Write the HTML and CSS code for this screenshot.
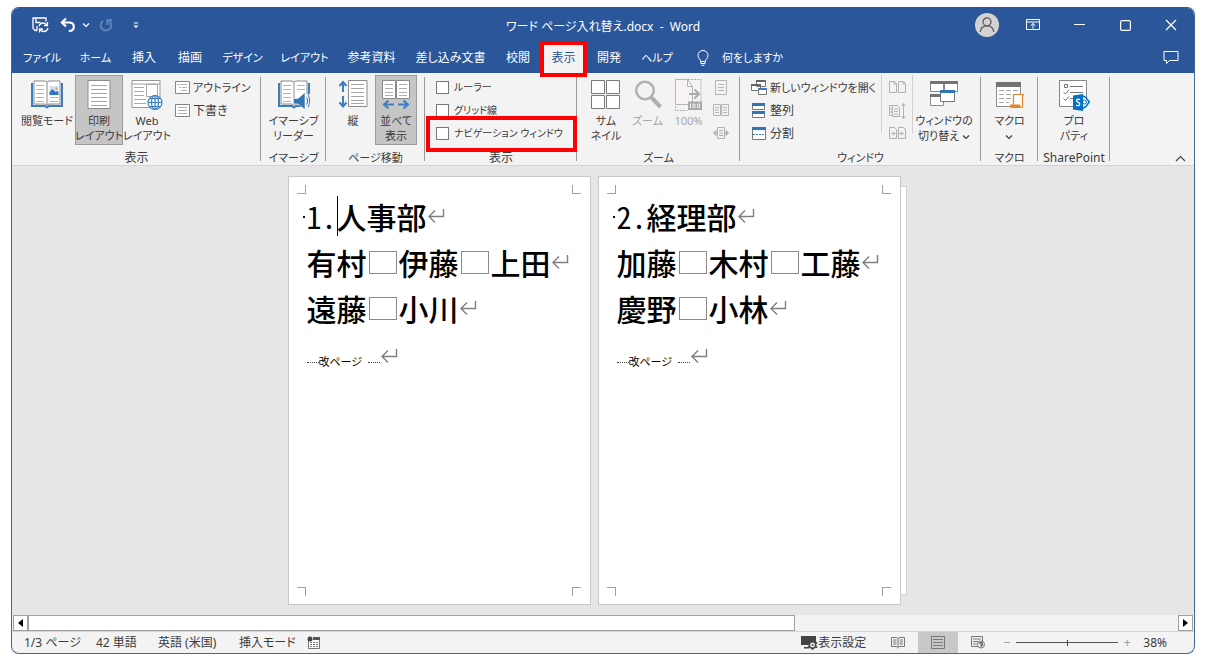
FILE: index.html
```html
<!DOCTYPE html>
<html lang="ja">
<head>
<meta charset="utf-8">
<title>ワード ページ入れ替え.docx - Word</title>
<link rel="stylesheet" href="styles.css">
</head>
<body>
<svg class="defs" width="0" height="0" aria-hidden="true">
  <symbol id="ret" viewBox="0 0 18 16"><path d="M16.500 1v7.500H2M8 2.500l-6 6 6 6" fill="none" stroke="#7f7f7f" stroke-width="1.400"/></symbol>
  <symbol id="chev" viewBox="0 0 8 6"><path d="M1 1.500l3 3 3-3" fill="none" stroke="currentColor" stroke-width="1.200"/></symbol>
</svg>
<div class="window">
  <header class="titlebar">
    <div class="qat">
      <button class="q" aria-label="上書き保存"><svg width="17" height="16" viewBox="0 0 17 16" fill="none" stroke="#fff" stroke-width="1.300"><path d="M5 13.500H3.200L1 11.300V1h13v3.500M4 1v4.500h4.500M5 13.500V9"/><path d="M7 9.300c.6-2.200 2.200-3.300 4.200-3.300 1.600 0 2.900.8 3.700 2.300M15.500 5v3.500H12M16 11c-.6 2.200-2.200 3.500-4.300 3.500-1.700 0-3-.9-3.700-2.500M7.500 15.500V12H11"/></svg></button>
      <button class="q undo" aria-label="元に戻す"><svg width="16" height="16" viewBox="0 0 16 16" fill="none" stroke="#fff" stroke-width="2.200"><path d="M6 1.500L1.900 5.500 6 9.500M2 5.500h7c3.500 0 4.800 2 4.800 4.200 0 2.800-2.200 4.300-5 4.300"/></svg></button>
      <button class="q-more" aria-label="元に戻すの履歴"><svg width="8" height="6"><use href="#chev"/></svg></button>
      <button class="q" aria-label="やり直し"><svg width="14" height="15" viewBox="0 0 14 15" fill="none" stroke="#5b80b8" stroke-width="2.200"><path d="M4 2.800A5.300 5.300 0 1 0 10 2.800M8.500 7V2h4.500"/></svg></button>
      <button class="q" aria-label="カスタマイズ"><svg width="6" height="7" viewBox="0 0 6 7"><path d="M1 .500h4v1H1zM.500 3.500h5L3 6z" fill="#fff"/></svg></button>
    </div>
    <h1 class="title">ワード ページ入れ替え.docx&nbsp; -&nbsp; Word</h1>
    <div class="sys">
      <button aria-label="アカウント"><svg width="24" height="24" viewBox="0 0 24 24"><circle cx="12" cy="12" r="12" fill="#d2d2d2"/><g fill="none" stroke="#555" stroke-width="1.200"><circle cx="12" cy="8.800" r="4"/><path d="M5.300 19c.3-4 3-6.200 6.700-6.200s6.400 2.200 6.700 6.200"/></g></svg></button>
      <button aria-label="リボンの表示オプション"><svg width="14" height="12" viewBox="0 0 14 12" fill="none" stroke="#fff"><path d="M.500.500h13v10H.500zM.500 3h13M7 9.500v-5M4.500 6.800L7 4.500l2.500 2.300"/></svg></button>
      <button aria-label="最小化"><svg width="11" height="11" viewBox="0 0 11 11"><path d="M0 4.500h11" stroke="#fff"/></svg></button>
      <button aria-label="最大化"><svg width="11" height="11" viewBox="0 0 11 11"><rect x=".6" y=".6" width="9.800" height="9.800" rx="1.500" fill="none" stroke="#fff" stroke-width="1.200"/></svg></button>
      <button aria-label="閉じる"><svg width="12" height="12" viewBox="0 0 12 12"><path d="M1 1l10 10M11 1L1 11" stroke="#fff" stroke-width="1.300"/></svg></button>
    </div>
  </header>

  <nav class="tabs">
    <div class="tablist">
      <button class="kana">ファイル</button><button class="kana">ホーム</button><button>挿入</button><button>描画</button><button class="kana">デザイン</button><button class="kana">レイアウト</button><button>参考資料</button><button>差し込み文書</button><button>校閲</button><button class="active callout">表示</button><button>開発</button><button class="kana">ヘルプ</button>
    </div>
    <button class="tell kana"><svg width="12" height="16" viewBox="0 0 12 16" fill="none" stroke="#fff"><path d="M3.800 11.500c0-2-2.800-3-2.800-6a5 5 0 0 1 10 0c0 3-2.800 4-2.800 6zM4 13.500h4M4.500 15.300h3M3.800 11.500v2M8.200 11.500v2"/></svg>何をしますか</button>
    <button class="comment" aria-label="コメント"><svg width="16" height="15" viewBox="0 0 16 15" fill="none" stroke="#fff"><path d="M1 1.500h14v9H6.500L3.500 13.500v-3H1z"/></svg></button>
  </nav>

  <section class="ribbon">
    <div class="group g-views">
      <div class="tools">
        <button class="big wide"><svg width="32" height="30" viewBox="0 0 32 30"><path d="M1 3v23h13l2 1.500 2-1.500h13V3" fill="none" stroke="#3e7ebf" stroke-width="2"/><path d="M3 1h11l2 1.200L18 1h11v23H18l-2 1.200L14 24H3z" fill="#fff" stroke="#8a8a8a"/><path d="M16 2.500v23" stroke="#8a8a8a"/><path d="M5 5.500h8M5 9.500h8M5 13.500h8M5 17.500h8M5 21.500h8M19 17.500h8M19 21.500h8" stroke="#b5b5b5"/><path d="M18.500 6h9v9h-9z" fill="#cfe2f3"/><path d="M18.500 15v-3l3-3 3 3 1.500-1 1.500 1v3z" fill="#2f76b8"/><circle cx="25.500" cy="8.500" r="1" fill="#e88b2e"/></svg><span>閲覧モード</span></button>
        <button class="big on print"><svg width="24" height="30" viewBox="0 0 24 30"><path d="M1 .500h22v28H1z" fill="#fff" stroke="#8a8a8a"/><path d="M4 5.500h16M4 9.500h16M4 13.500h16M4 17.500h16M4 21.500h16M4 25.500h16" stroke="#a5a5a5"/></svg><span>印刷<br>レイアウト</span></button>
        <button class="big web"><svg width="32" height="30" viewBox="0 0 32 30"><path d="M1 .500h28v27H1zM1 4h28" fill="#fff" stroke="#999"/><path d="M3 7.500h10M3 11.500h10M3 15.500h10M3 19.500h12M3 23.500h12" stroke="#a8a8a8"/><path d="M15.500 4.500h11v12h-11z" fill="#fff" stroke="#a8a8a8"/><g fill="#fff" stroke="#3e7ebf" stroke-width="1.200"><circle cx="24" cy="22.500" r="7"/><path fill="none" d="M17 22.500h14M18.500 18.500h11M18.500 26.500h11M24 15.500v14"/><ellipse fill="none" cx="24" cy="22.500" rx="3.500" ry="7"/></g></svg><span>Web<br>レイアウト</span></button>
        <div class="stack">
          <button class="row kana"><svg width="15" height="13" viewBox="0 0 15 13"><path d="M.500.500h14v12H.500z" fill="#fff" stroke="#858585"/><path d="M2 3.500h2M5 3.500h7M4 6.500h2M7 6.500h5M6 9.500h6" stroke="#b5b5b5"/></svg>アウトライン</button>
          <button class="row"><svg width="15" height="13" viewBox="0 0 15 13"><path d="M.500.500h14v12H.500z" fill="#fff" stroke="#858585"/><path d="M3 3.500h9M3 6.500h9M3 9.500h9" stroke="#b0b0b0"/></svg>下書き</button>
        </div>
      </div>
      <div class="label">表示</div>
    </div>
    <div class="group g-imm">
      <div class="tools center">
        <button class="big"><svg width="32" height="30" viewBox="0 0 32 30"><path d="M1 3v23h13l2 1.500 2-1.500h13V3" fill="none" stroke="#3e7ebf" stroke-width="2"/><path d="M3 1h11l2 1.200L18 1h11v23H18l-2 1.200L14 24H3z" fill="#fff" stroke="#8a8a8a"/><path d="M16 2.500v20" stroke="#8a8a8a"/><path d="M5 5.500h8M5 9.500h8M5 13.500h8M5 17.500h8M5 21.500h8M19 5.500h8M19 9.500h8" stroke="#b5b5b5"/><path d="M25 14h7v15h-7z" fill="#f3f3f3"/><path d="M15.500 18.500h4.500l7-6v17l-7-5.500h-4.500z" fill="#2f76b8" stroke="#fff" stroke-width=".6"/><path d="M28.500 17.500c1.500 2 1.500 5 0 7M30 14.500c2 3 2 10 0 12.500" stroke="#2f76b8" fill="none"/></svg><span>イマーシブ<br>リーダー</span></button>
      </div>
      <div class="label kana">イマーシブ</div>
    </div>
    <div class="group g-move">
      <div class="tools">
        <button class="big vert"><svg width="30" height="30" viewBox="0 0 30 30"><path d="M10.500.500h18.500v26H10.500z" fill="#fff" stroke="#8a8a8a"/><path d="M13 4.500h13M13 8.500h13M13 12.500h13M13 16.500h13M13 20.500h13M13 23.500h13" stroke="#a5a5a5"/><path d="M5 3v9M1.500 6L5 2l3.500 4M5 16v9M1.500 22.500L5 26.500l3.500-4" fill="none" stroke="#3e7ebf" stroke-width="2"/></svg><span>縦</span></button>
        <button class="big on side"><svg width="30" height="30" viewBox="0 0 30 30"><path d="M1.500.500h13v18h-13zM15.500.500h13v18h-13z" fill="#fff" stroke="#8a8a8a"/><path d="M4 4.500h8M4 8.500h8M4 12.500h8M4 15.500h8M18 4.500h8M18 8.500h8M18 12.500h8M18 15.500h8" stroke="#b0b0b0"/><path d="M3.500 24.500H13M7.500 20.500l-4.500 4 4.500 4M17 24.500h10M22.500 20.500l4.500 4-4.500 4" fill="none" stroke="#3e7ebf" stroke-width="2"/></svg><span>並べて<br>表示</span></button>
      </div>
      <div class="label kana">ページ移動</div>
    </div>
    <div class="group g-show">
      <div class="tools stack">
        <label class="row"><input type="checkbox">ルーラー</label>
        <label class="row"><input type="checkbox">グリッド線</label>
        <label class="row callout"><input type="checkbox">ナビゲーション ウィンドウ</label>
      </div>
      <div class="label">表示</div>
    </div>
    <div class="group g-zoom">
      <div class="tools">
        <button class="big z1"><svg width="30" height="30" viewBox="0 0 30 30"><path d="M.500.500h13v13H.500zM15.500.500h13v13h-13zM.500 15.500h13v13H.500zM15.500 15.500h13v13h-13z" fill="#fff" stroke="#7a7a7a"/></svg><span>サム<br>ネイル</span></button>
        <button class="big z2" disabled><svg width="28" height="30" viewBox="0 0 28 30" fill="none" stroke="#b0b0b0"><circle cx="11" cy="10.500" r="8.800" stroke-width="2.500"/><path d="M17.500 17.500l9 9.500" stroke-width="4"/></svg><span>ズーム</span></button>
        <button class="big z3" disabled><svg width="28" height="30" viewBox="0 0 28 30"><path d="M.500-.500v25h17V6.500l-5-7z" fill="#f6f2f6" stroke="#b5b5b5"/><path d="M12.500-.500v7h5" fill="none" stroke="#b5b5b5"/><path d="M.500 26v4.500h12M13-.500h13V21" fill="none" stroke="#b0b0b0" stroke-dasharray="2 1"/><path d="M14 14h10M19.500 9.500l4.500 4.500-4.500 4.500" fill="none" stroke="#aaa" stroke-width="2"/><path d="M13 21.500h14v8.500H13z" fill="#a9a9a9"/><path d="M15.500 23.500v4.500" stroke="#fff"/><path d="M18 24h2v3.500h-2zM22.500 24h2v3.500h-2z" fill="none" stroke="#fff" stroke-width=".8"/></svg><span>100%</span></button>
        <div class="minis">
          <button aria-label="1 ページ" disabled><svg width="16" height="15" viewBox="0 0 16 15" fill="none" stroke="#b5b5b5"><path d="M2.500.500h11v14h-11zM5 4.500h6M5 7.500h6M5 10.500h6"/></svg></button>
          <button aria-label="複数ページ" disabled><svg width="16" height="13" viewBox="0 0 16 13" fill="none" stroke="#b5b5b5"><path d="M.500.500h7v11h-7zM8.500.500h7v11h-7zM2 3.500h4M2 6h4M2 8.500h4M10 3.500h4M10 6h4M10 8.500h4"/></svg></button>
          <button aria-label="ページ幅" disabled><svg width="16" height="13" viewBox="0 0 16 13" fill="none" stroke="#b0b0b0"><path d="M4.500.500h7v11h-7zM6 3.500h4M6 6h4M6 8.500h4"/><path d="M3 3.500v5L.500 6zM13 3.500v5L15.500 6z" fill="#b0b0b0"/></svg></button>
        </div>
      </div>
      <div class="label kana">ズーム</div>
    </div>
    <div class="group g-window">
      <div class="tools">
        <div class="stack">
          <button class="row kana"><svg width="16" height="16" viewBox="0 0 16 16"><path d="M5.500.500h9v6h-9zM.500 4.500h9v6h-9z" fill="#fff" stroke="#777"/><path d="M5 1h10M0 5h10" stroke="#666" stroke-width="2"/><path d="M7.500 8.500h8v6h-8z" fill="#fff" stroke="#777"/><path d="M7 9h9" stroke="#3e7ebf" stroke-width="2"/></svg>新しいウィンドウを開く</button>
          <button class="row"><svg width="16" height="16" viewBox="0 0 16 16"><path d="M1.500.500h12v6h-12zM1.500 8.500h12v6h-12z" fill="#fff" stroke="#777"/><path d="M1 1.500h13M1 9.500h13" stroke="#2f76b8" stroke-width="3"/></svg>整列</button>
          <button class="row"><svg width="16" height="14" viewBox="0 0 16 14"><path d="M1.500.500h13v12h-13z" fill="#fff" stroke="#777"/><path d="M1 1.500h14" stroke="#2f76b8" stroke-width="3"/><path d="M2 7.500h12" stroke="#3e7ebf" stroke-dasharray="2 1"/></svg>分割</button>
        </div>
        <div class="minis lined">
          <button aria-label="並べて比較" disabled><svg width="17" height="13" viewBox="0 0 17 13" fill="none" stroke="#b0b0b0"><path d="M.500.500h5l2 2v9h-7zM9.500.500h5l2 2v9h-7zM5 .500v2.500h2.500M14 .500v2.500h2.500"/></svg></button>
          <button aria-label="同時にスクロール" disabled><svg width="17" height="16" viewBox="0 0 17 16" fill="none" stroke="#b0b0b0"><path d="M.500 2.500h3M3.500 2.500h5l2 2v9h-7zM3.500 12.500h-3v-10M5 6h4M5 8.500h4M5 11h4M1 6h2M1 9h2M14.500 1v14M12.500 3l2-2.500 2 2.500M12.500 13l2 2.500 2-2.500"/></svg></button>
          <button aria-label="ウィンドウの位置を元に戻す" disabled><svg width="17" height="13" viewBox="0 0 17 13" fill="none" stroke="#b0b0b0"><path d="M.500.500h5l2 2v9h-7zM9.500.500h5l2 2v9h-7zM2 6.500h4M4 4.500l2 2-2 2M15 6.500h-4M13 4.500l-2 2 2 2"/></svg></button>
        </div>
        <button class="big switch"><svg width="30" height="30" viewBox="0 0 30 30"><path d="M1.500 1.500h13v10h-13zM15.500 1.500h13v10h-13zM1.500 14.500h13v11h-13z" fill="#fff" stroke="#8a8a8a"/><path d="M1 2.500h14M15 2.500h14M1 15.500h14" stroke="#737373" stroke-width="3"/><path d="M11.500 10.500h14v11h-14z" fill="#fff" stroke="#777"/><path d="M11 11.500h15" stroke="#2f76b8" stroke-width="3"/></svg><span>ウィンドウの<br>切り替え <svg width="8" height="6"><use href="#chev"/></svg></span></button>
      </div>
      <div class="label kana">ウィンドウ</div>
    </div>
    <div class="group g-macro">
      <div class="tools center">
        <button class="big"><svg width="30" height="30" viewBox="0 0 30 30"><path d="M1.500 2.500h24v24h-24z" fill="#fff" stroke="#8a8a8a"/><path d="M1 4.500h25" stroke="#737373" stroke-width="5"/><path d="M4 10.500h5M11 10.500h5M18 10.500h5M4 14.500h5M11 14.500h5M4 18.500h5M11 18.500h5M4 22.500h5M11 22.500h3" stroke="#a5a5a5"/><path d="M18.500 25V14.500h10.500c-1.500.6-1.500 2-1.500 3V27h-11" fill="#fff" stroke="#e8832a" stroke-width="1.200"/><path d="M15 24.500h10c0 2 .5 3.500 2 3.500H16.500c-1.500 0-1.500-1.500-1.500-3.500z" fill="#e8832a"/></svg><span>マクロ<br><svg width="8" height="6"><use href="#chev"/></svg></span></button>
      </div>
      <div class="label kana">マクロ</div>
    </div>
    <div class="group g-share">
      <div class="tools center">
        <button class="big"><svg width="32" height="30" viewBox="0 0 32 30"><path d="M1.500.500h27v26h-27z" fill="#fff" stroke="#858585"/><path d="M6.500 4.500h3v3h-3zM12 6.500h13M12 12.500h13M12 18.500h4M5.500 12l2 2 3.500-4M5.500 18.500l2 2 3.500-4" fill="none" stroke="#777"/><path d="M24 15.500l4 2 3.300 4.500-3.300 4.500-4 2.500" fill="#fff" stroke="#0072c6" stroke-width="1.500"/><circle cx="26.500" cy="22" r="2" fill="none" stroke="#0072c6"/><path d="M15 15.500L25 14v17l-10-1.500z" fill="#0072c6"/><path d="M22 19.800c-1-1-3.500-1-3.500.8 0 2 3.300 1.500 3.300 3.500 0 1.800-2.500 1.800-3.600.8" fill="none" stroke="#fff" stroke-width="1.300"/></svg><span>プロ<br>パティ</span></button>
      </div>
      <div class="label">SharePoint</div>
    </div>
    <button class="collapse" aria-label="リボンを折りたたむ"><svg width="11" height="7" viewBox="0 0 11 7"><path d="M1 6l4.500-4.500L10 6" fill="none" stroke="#444" stroke-width="1.200"/></svg></button>
  </section>

  <main class="canvas">
    <article class="page">
      <i class="crop tl"></i><i class="crop tr"></i><i class="crop bl"></i><i class="crop br"></i>
      <h2 class="line heading"><span>1.</span><i class="caret"></i><span>人事部</span><svg class="ret"><use href="#ret"/></svg></h2>
      <p class="line">有村<i class="sp"></i>伊藤<i class="sp"></i>上田<svg class="ret"><use href="#ret"/></svg></p>
      <p class="line">遠藤<i class="sp"></i>小川<svg class="ret"><use href="#ret"/></svg></p>
      <p class="break"><i class="dots"></i><span>改ページ</span><i class="dots"></i><svg class="ret"><use href="#ret"/></svg></p>
    </article>
    <div class="sheets">
      <article class="page">
        <i class="crop tl"></i><i class="crop tr"></i><i class="crop bl"></i><i class="crop br"></i>
        <h2 class="line heading"><span>2.</span><span>経理部</span><svg class="ret"><use href="#ret"/></svg></h2>
        <p class="line">加藤<i class="sp"></i>木村<i class="sp"></i>工藤<svg class="ret"><use href="#ret"/></svg></p>
        <p class="line">慶野<i class="sp"></i>小林<svg class="ret"><use href="#ret"/></svg></p>
        <p class="break"><i class="dots"></i><span>改ページ</span><i class="dots"></i><svg class="ret"><use href="#ret"/></svg></p>
      </article>
    </div>
  </main>

  <div class="hscroll">
    <button aria-label="左へ"><svg width="5" height="8" viewBox="0 0 5 8"><path d="M5 0v8L0 4z"/></svg></button>
    <div class="thumb"></div>
    <div class="rest"></div>
    <button aria-label="右へ"><svg width="5" height="8" viewBox="0 0 5 8"><path d="M0 0v8l5-4z"/></svg></button>
  </div>

  <footer class="status">
    <div class="left">
      <button class="s-page">1/3 ページ</button><button class="s-words">42 単語</button><button class="s-lang">英語 (米国)</button><button class="s-mode">挿入モード</button>
      <button aria-label="マクロの記録"><svg width="13" height="13" viewBox="0 0 13 13"><path d="M1.500 4v8.500h11V1.500H6" fill="#fff" stroke="#777"/><path d="M6 1h7v3H6z" fill="#555"/><circle cx="3" cy="3" r="2.500" fill="#444"/><path d="M3 6.500h8M3 8.500h8M3 10.500h8" stroke="#777" stroke-dasharray="2 1"/></svg></button>
    </div>
    <div class="right">
      <button class="disp"><svg width="17" height="15" viewBox="0 0 17 15"><path d="M0 1h15v9H0zM3 12h5v1.500H3z" fill="#444"/><circle cx="11.500" cy="10" r="3.200" fill="#f3f3f3" stroke="#444" stroke-width="1.500"/><circle cx="11.500" cy="10" r="1" fill="#444"/><path d="M11.500 5v2M11.500 13v2M6.800 7.500l1.700 1M14.500 11.500l1.700 1M6.800 12.500l1.700-1M14.500 8.500l1.700-1" stroke="#444" stroke-width="1.500"/></svg>表示設定</button>
      <button class="view" aria-label="閲覧モード"><svg width="14" height="12" viewBox="0 0 14 12" fill="none" stroke="#777"><path d="M.500.500H6l1 1 1-1h5.500v9H8l-1 1-1-1H.500zM7 1v10.500M2 3h3.500M2 5h3.500M2 7h3.500M8.500 3H12M8.500 5H12M8.500 7H12"/></svg></button>
      <button class="view sel" aria-label="印刷レイアウト"><svg width="14" height="14" viewBox="0 0 14 14" fill="none" stroke="#777"><path d="M.500.500h13v12H.500zM2 3.500h10M2 6.500h10M2 9.500h10"/></svg></button>
      <button class="view" aria-label="Web レイアウト"><svg width="14" height="13" viewBox="0 0 14 13" fill="none" stroke="#777"><path d="M7 10.500H.500V.500h11V5M2 3h8M2 5.500h5M2 8h4"/><circle cx="10" cy="8.500" r="3.500" fill="#fff"/><path d="M8 7l2 1v3l2-2-1-3z" fill="#777"/></svg></button>
      <button class="pm" aria-label="縮小">−</button>
      <input class="slider" type="range" min="0" max="100" value="50" aria-label="ズーム">
      <button class="pm" aria-label="拡大">+</button>
      <button class="pct">38%</button>
    </div>
  </footer>
</div>
</body>
</html>
```
FILE: styles.css
```css
* { box-sizing: border-box; }
body {
  margin: 0;
  padding: 7px 14px 11px 11px;
  min-height: 100vh;
  display: flex;
  background: #fff;
  color: #3b3b3b;
  font: 12px/15px "Noto Sans", "Noto Sans CJK JP", sans-serif;
  font-feature-settings: "palt";
}
button {
  margin: 0;
  padding: 0;
  border: 0;
  background: none;
  color: inherit;
  font: inherit;
  font-feature-settings: inherit;
  white-space: nowrap;
}
svg { flex: none; overflow: visible; }
.defs { position: absolute; }
.kana { font-size: 11px; }
.window {
  flex: 1;
  min-width: 0;
  display: flex;
  flex-direction: column;
  border: 1px solid #3f6a98;
  border-top-color: #2b579a;
  border-radius: 8px;
  background: #f3f3f3;
}

/* title bar */
.titlebar {
  display: grid;
  grid-template-columns: 1fr auto 1fr;
  align-items: center;
  height: 34px;
  background: #2b579a;
  color: #fff;
  border-radius: 7px 7px 0 0;
}
.qat { display: flex; align-items: center; gap: 2px; padding-left: 14px; }
.q { width: 28px; height: 24px; display: grid; place-items: center; }
.undo { width: 24px; }
.q-more { width: 8px; display: grid; place-items: center; }
.title { margin: 0; padding-top: 3px; font-size: 12px; font-weight: 400; white-space: nowrap; }
.sys { display: flex; justify-content: flex-end; }
.sys button { width: 46px; height: 32px; display: grid; place-items: center; }

/* tabs */
.tabs { display: flex; align-items: stretch; height: 31px; background: #2b579a; color: #fff; padding-left: 2px; }
.tablist { display: grid; grid-template-columns: 56px 51px 46px 46px 59px 65px 69px 89px 46px 45px 46px 50px; }
.tabs .active { background: #f3f3f3; color: #2b579a; }
.callout { position: relative; }
.callout::after { content: ""; position: absolute; z-index: 2; border: 4px solid #f00; pointer-events: none; }
.active.callout::after { inset: -1px -1px -4px; }
.tell { display: flex; align-items: center; gap: 13px; margin-left: 15px; }
.comment { margin-left: auto; width: 46px; display: grid; place-items: center; }

/* ribbon */
.ribbon { display: flex; height: 93px; background: #f3f3f3; border-bottom: 1px solid #d4d4d4; }
.group { position: relative; display: flex; flex-direction: column; flex: none; padding-top: 2px; }
.group::after { content: ""; position: absolute; right: 0; top: 4px; bottom: 4px; width: 1px; background: #999; }
.g-views { width: 249px; }
.g-imm { width: 65px; }
.g-move { width: 99px; }
.g-show { width: 152px; }
.g-zoom { width: 163px; }
.g-window { width: 241px; }
.g-macro { width: 57px; }
.g-share { width: 72px; }
.tools { display: flex; height: 75px; }
.center { justify-content: center; }
.label { text-align: center; white-space: nowrap; }
.big { display: flex; flex-direction: column; align-items: center; gap: 3px; flex: none; width: 48px; height: 70px; padding-top: 4px; border: 1px solid transparent; font-size: 11px; }
.big:disabled { color: #a6a6a6; }
.big.on { background: #c5c5c5; border-color: #9b9b9b; }
.wide { width: 54px; margin-left: 8px; }
.print { margin-left: 1px; }
.stack { display: flex; flex-direction: column; padding-top: 1px; }
.row { display: flex; align-items: center; gap: 3px; height: 23px; white-space: nowrap; }
.g-views .stack { padding-left: 4px; }
.vert { width: 42px; margin-left: 6px; }
.side { width: 42px; margin-left: 1px; }
.g-show .stack { padding-left: 11px; font-size: 10px; }
.g-show .row { gap: 5px; }
.g-show input { appearance: none; width: 13px; height: 13px; margin: 0; border: 1px solid #777; background: #fff; }
.row.callout::after { inset: -6px 0 -7px -10px; }
.z1 { width: 42px; margin-left: 8px; }
.z2, .z3 { width: 41px; }
.minis { display: flex; flex-direction: column; padding-top: 1px; }
.minis button { height: 23px; width: 24px; display: grid; place-items: center; }
.g-window .stack { width: 141px; padding-left: 11px; }
.lined { height: 58px; width: 32px; border: solid #d0d0d0; border-width: 0 1px; align-items: center; }
.lined button { flex: none; }
.switch { width: 62px; }
.collapse { margin-left: auto; width: 27px; align-self: flex-end; height: 15px; }

/* document area */
.canvas { flex: 1; display: flex; justify-content: center; align-items: flex-start; gap: 7px; padding: 10px 18px 9px 0; background: #e6e6e6; }
.sheets { position: relative; }
.sheets::before { content: ""; position: absolute; inset: 10px -6px 10px 50%; background: #fff; border: 1px solid #d2d2d2; }
.page {
  position: relative;
  width: 303px;
  aspect-ratio: 303 / 429;
  padding: 16px 0 0 18px;
  background: #fff;
  border: 1px solid #c8c8c8;
  color: #000;
}
.line {
  position: relative;
  display: flex;
  align-items: center;
  height: 46px;
  margin: 0;
  font: 500 30px/46px "Noto Sans CJK JP", sans-serif;
  font-feature-settings: "hwid";
  white-space: nowrap;
}
.heading > span:first-of-type { font-weight: 400; }
.heading::before { content: ""; position: absolute; left: -4px; top: 23px; width: 2px; height: 2px; background: #000; }
.caret { width: 1px; height: 40px; margin-right: -1px; background: #000; }
.sp { width: 28px; height: 23px; margin: 0 2px; border: 1px solid #8a8a8a; }
.ret { width: 18px; height: 16px; }
.break { display: flex; align-items: flex-end; height: 20px; margin: 17px 0 0; font: 11px/14px "Noto Sans CJK JP", sans-serif; font-feature-settings: "palt"; }
.break .ret { align-self: flex-start; }
.dots { width: 12px; height: 6px; border-top: 1px dotted #444; }
.break span + .dots { margin-left: 6px; }
.crop { position: absolute; width: 9px; height: 9px; border: 0 solid #a0a0a0; }
.tl { left: 8px; top: 8px; border-width: 0 1px 1px 0; }
.tr { right: 9px; top: 8px; border-width: 0 0 1px 1px; }
.bl { left: 8px; bottom: 8px; border-width: 1px 1px 0 0; }
.br { right: 9px; bottom: 8px; border-width: 1px 0 0 1px; }

/* scroll bar */
.hscroll { display: flex; height: 16px; padding: 0 1px; background: #f3f3f3; }
.hscroll button { width: 15px; border: 1px solid #a0a0a0; background: #fff; display: grid; place-items: center; }
.thumb { flex: 2; border: 1px solid #a0a0a0; background: #fff; }
.rest { flex: 1; }

/* status bar */
.status { display: flex; justify-content: space-between; height: 22px; border-top: 1px solid #d4d4d4; }
.left, .right { display: flex; align-items: center; }
.left { padding-left: 12px; }
.left button { text-align: left; }
.s-page { width: 72px; }
.s-words { width: 62px; }
.s-lang { width: 81px; }
.s-mode { width: 68px; }
.left svg { display: block; }
.disp { display: flex; align-items: center; margin-right: 12px; }
.view { width: 40px; height: 21px; display: grid; place-items: center; }
.sel { background: #c8c8c8; }
.pm { width: 18px; color: #999; }
.slider { appearance: none; width: 102px; height: 15px; margin: 0; background: linear-gradient(#555, #555) center / 100% 1px no-repeat; }
.slider::-webkit-slider-thumb { appearance: none; width: 1px; height: 6px; background: #444; }
.pct { margin: 0 27px 0 7px; }
```
